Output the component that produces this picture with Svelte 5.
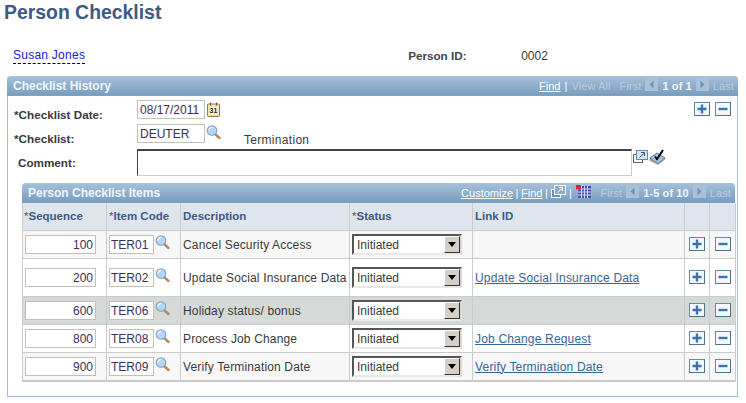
<script>
const items = [
  { seq: 100, code: 'TER01', desc: 'Cancel Security Access', link: '', cls: 'odd' },
  { seq: 200, code: 'TER02', desc: 'Update Social Insurance Data', link: 'Update Social Insurance Data', cls: 'tall' },
  { seq: 600, code: 'TER06', desc: 'Holiday status/ bonus', link: '', cls: 'grey' },
  { seq: 800, code: 'TER08', desc: 'Process Job Change', link: 'Job Change Request', cls: '' },
  { seq: 900, code: 'TER09', desc: 'Verify Termination Date', link: 'Verify Termination Date', cls: 'odd' }
]
</script>

{#snippet lens()}
  <svg class="lens" width="15" height="15" viewBox="0 0 15 15">
    <line x1="9" y1="9" x2="13.500" y2="13" stroke="#b88a5c" stroke-width="2.400" stroke-linecap="round" />
    <circle cx="6" cy="5.500" r="4.800" fill="#b5d6f3" stroke="#7ba3c6" stroke-width="1.100" />
    <path d="M3 5.500a3 3 0 0 1 3-3" fill="none" stroke="#fff" stroke-width="1.200" />
  </svg>
{/snippet}

{#snippet plus()}
  <span class="btn"><svg width="14" height="12" viewBox="0 0 14 12"><path d="M5.800 1.500h2.400v3.300h3.300v2.400h-3.300v3.300h-2.400v-3.300h-3.300v-2.400h3.300z" fill="#3d74ac" /></svg></span>
{/snippet}

{#snippet minus()}
  <span class="btn"><svg width="14" height="12" viewBox="0 0 14 12"><rect x="2.500" y="4.800" width="9" height="2.400" fill="#3d74ac" /></svg></span>
{/snippet}

{#snippet prev()}
  <span class="nav"><svg width="13" height="13" viewBox="0 0 13 13"><path d="M8.500 2.500v8l-4-4z" fill="#6f93b5" /></svg></span>
{/snippet}

{#snippet next()}
  <span class="nav"><svg width="13" height="13" viewBox="0 0 13 13"><path d="M4.500 2.500v8l4-4z" fill="#6f93b5" /></svg></span>
{/snippet}

<main>
  <h1>Person Checklist</h1>

  <div class="person">
    <a class="name" href="#top">Susan Jones</a>
    <span class="pid-label">Person ID:</span>
    <span class="pid">0002</span>
  </div>

  <section class="box">
    <header class="bar">
      <span class="bar-title">Checklist History</span>
      <span class="tools">
        <span class="lnk">Find</span><span class="sep wide">|</span><span class="off">View All</span>
        <span class="off first">First</span>{@render prev()}<b>1 of 1</b>{@render next()}<span class="off">Last</span>
      </span>
    </header>

    <div class="form">
      <div class="row-btns">{@render plus()}{@render minus()}</div>

      <div class="frow date">
        <label for="cdate">*Checklist Date:</label>
        <input id="cdate" class="field w-date" value="08/17/2011" />
        <svg class="cal" width="13" height="15" viewBox="0 0 13 15">
          <rect x=".5" y="2" width="12" height="12.500" rx="1" fill="#efe2ae" stroke="#8c7a45" />
          <path d="M3.500 .5v3M9.500 .5v3" stroke="#6b5a2c" />
          <rect x="2.500" y="5" width="8" height="7" fill="#fbf7e6" />
          <text x="6.500" y="11" text-anchor="middle" class="cal-num">31</text>
        </svg>
      </div>

      <div class="frow list">
        <label for="clist">*Checklist:</label>
        <input id="clist" class="field w-date" value="DEUTER" />
        {@render lens()}
        <span class="descr">Termination</span>
      </div>

      <div class="frow comment">
        <label for="cmt">Comment:</label>
        <textarea id="cmt"></textarea>
        <svg class="pop" width="15" height="13" viewBox="0 0 15 13">
          <rect x=".5" y="4.500" width="9" height="8" fill="#fff" stroke="#59636d" />
          <rect x="3.500" y=".5" width="11" height="9" fill="#d5e5f3" stroke="#6c8aa5" />
          <path d="M6.500 7.500l5-4.500M8 2.500h3.500v3.500" fill="none" stroke="#44535f" />
        </svg>
        <svg class="spell" width="17" height="16" viewBox="0 0 17 16">
          <path d="M1 9l7-5 8 5-7 6z" fill="#9cc4e4" stroke="#5b7486" />
          <path d="M1 10v1.500l8 4 7-5.500v-1l-7 5.500z" fill="#e9b9b9" stroke="#66707a" stroke-width=".6" />
          <path d="M6 7.500l2 2.500 6-9" fill="none" stroke="#000" stroke-width="2" />
        </svg>
      </div>

      <div class="grid">
        <header class="bar inner">
          <span class="bar-title">Person Checklist Items</span>
          <span class="tools">
            <span class="lnk">Customize</span><span class="sep">|</span><span class="lnk">Find</span><span class="sep">|</span>
            <svg class="pop2" width="15" height="13" viewBox="0 0 15 13">
              <rect x=".5" y="4.500" width="9" height="8" fill="#6f93b5" stroke="#fff" />
              <rect x="3.500" y=".5" width="11" height="9" fill="#8aaac6" stroke="#fff" />
              <path d="M6.500 7.500l5-4.500M8 2.500h3.500v3.500" fill="none" stroke="#fff" />
            </svg><span class="sep">|</span>
            <svg class="cols" width="15" height="14" viewBox="0 0 15 14">
              <rect x="2" y="1" width="13" height="12" fill="#4a4fae" />
              <path d="M5.500 1v12M8.500 1v12M11.500 1v12M2 4h13M2 7h13M2 10h13" stroke="#d3d8f0" />
              <path d="M0 0h5l-1.500 1.500 2 2-2 2-2-2-1.500 1.500z" fill="#e0262c" />
            </svg>
            <span class="off first">First</span>{@render prev()}<b>1-5 of 10</b>{@render next()}<span class="off">Last</span>
          </span>
        </header>

        <table>
          <colgroup>
            <col class="w1" /><col class="w2" /><col class="w3" />
            <col class="w4" /><col class="w5" /><col class="w6" /><col class="w7" />
          </colgroup>
          <thead>
            <tr>
              <th class="first-h"><i>*</i>Sequence</th>
              <th><i>*</i>Item Code</th>
              <th>Description</th>
              <th><i>*</i>Status</th>
              <th>Link ID</th>
              <th></th>
              <th></th>
            </tr>
          </thead>
          <tbody>
            {#each items as item (item.seq)}
              <tr class={item.cls}>
                <td class="c-seq"><input class="field seq" value={item.seq} /></td>
                <td class="c-code"><input class="field code" value={item.code} />{@render lens()}</td>
                <td class="c-desc">{item.desc}</td>
                <td class="c-status">
                  <span class="select"><span class="sel-text">Initiated</span><span class="arrow"></span></span>
                </td>
                <td class="c-link">{#if item.link}<a href="#top">{item.link}</a>{/if}</td>
                <td class="c-btn">{@render plus()}</td>
                <td class="c-btn">{@render minus()}</td>
              </tr>
            {/each}
          </tbody>
        </table>
      </div>
    </div>
  </section>
</main>

<style>
:global(body) {
  background: #fff;
}

main {
  width: 746px;
  height: 403px;
  overflow: hidden;
  font-family: "Liberation Sans", Arial, sans-serif;
  font-size: 12px;
  color: #3a3a3a;
}

h1 {
  margin: 0;
  padding: 2px 0 1px 4px;
  font-size: 19.400px;
  line-height: 20px;
  color: #3c5a86;
}

.person {
  display: flex;
  align-items: center;
  height: 20px;
  margin-top: 23px;
  padding-left: 13px;
}

.name {
  flex: none;
  height: 15px;
  line-height: 15px;
  letter-spacing: .25px;
  color: #1a1ad0;
  text-decoration: none;
  border-bottom: 1px dashed #000;
}

.pid-label {
  margin: -1px 0 0 323px;
  width: 113px;
  font-weight: bold;
  font-size: 11.700px;
  color: #444;
}

.box {
  width: 731px;
  height: 321px;
  margin: 10px 0 0 7px;
  border: 1px solid #a3bfd9;
  border-top: 0;
  border-radius: 4px 4px 0 0;
  box-sizing: border-box;
}

.bar {
  display: flex;
  align-items: center;
  justify-content: space-between;
  height: 20px;
  margin: 0 -1px;
  padding: 0 4px 0 6px;
  border-radius: 4px 4px 0 0;
  background: linear-gradient(#a3bfd9, #7a9dbf);
  border-top: 1px solid #a9bfd2;
  border-bottom: 1px solid #7fa1c0;
  box-sizing: border-box;
  color: #f1f5f9;
}

.bar-title {
  font-weight: bold;
}

.tools {
  display: flex;
  align-items: center;
  font-size: 11px;
  letter-spacing: .1px;
  color: #fff;
}

.lnk {
  letter-spacing: 0;
  text-decoration: underline;
}

.sep {
  margin: 0 2.500px;
}

.sep.wide {
  margin: 0 4px;
}

.off {
  color: #b8cbdd;
}

.first {
  margin-left: 9px;
}

.tools b {
  color: #f2f6fa;
}

.nav {
  display: flex;
  width: 13px;
  height: 13px;
  margin: -3px 4px 0;
  background: #a9c2d9;
}

.form {
  position: relative;
  padding-top: 4px;
}

.row-btns {
  position: absolute;
  top: 6px;
  right: 6px;
  display: flex;
  gap: 5px;
}

.btn {
  display: inline-flex;
  align-items: center;
  justify-content: center;
  width: 14px;
  height: 12px;
  border: 1px solid #648ba0;
  border-right-color: #4d7488;
  border-bottom-color: #4d7488;
  background: #f1f7fb;
  overflow: hidden;
}

.frow {
  display: flex;
  align-items: flex-start;
}

.frow label {
  flex: none;
  box-sizing: border-box;
  width: 129px;
  padding: 7px 0 0 6px;
  font-weight: bold;
  font-size: 11.700px;
  line-height: 15px;
  color: #3a3a3a;
}

.frow.date {
  height: 24px;
}

.frow.list {
  height: 25px;
}

.frow.comment {
  height: 34px;
}

.frow.comment label {
  padding: 6px 0 0 10px;
}

.field {
  box-sizing: border-box;
  height: 19px;
  padding: 0 2px;
  border: 1px solid #c4c0b8;
  background: #fff;
  font: 12px "Liberation Sans", Arial, sans-serif;
  color: #3a2f5a;
  outline: none;
  border-radius: 0;
}

.w-date {
  flex: none;
  width: 68px;
}

.cal {
  margin: 2px 0 0 2px;
}

.cal-num {
  font: bold 7px "Liberation Sans", Arial, sans-serif;
  fill: #222;
}

.lens {
  flex: none;
  margin: 1px 0 0 1px;
}

.descr {
  margin: 9px 0 0 23px;
  letter-spacing: .3px;
}

textarea {
  flex: none;
  box-sizing: border-box;
  width: 495px;
  height: 27px;
  margin: 0;
  padding: 0;
  resize: none;
  border-style: solid;
  border-width: 2px 1px 1px 1px;
  border-color: #444 #cfcbc4 #cfcbc4 #444;
  outline: none;
  border-radius: 0;
}

.pop {
  margin: 1px 0 0 1px;
}

.spell {
  margin: 0 0 0 1px;
}

.grid {
  width: 713px;
  margin-left: 14px;
}

.bar.inner {
  margin: 0;
  padding: 0 4px 0 6px;
  height: 20px;
}

.pop2 {
  margin: -3px 0 0 1px;
}

.cols {
  margin: -3px 0 0 2px;
}

table {
  width: 713px;
  table-layout: fixed;
  border-collapse: collapse;
  border: 1px solid #cbcbcb;
  border-bottom-width: 2px;
  border-top: 0;
  color: #3a3a3a;
}

.w1 { width: 84px; }
.w2 { width: 74px; }
.w3 { width: 169px; }
.w4 { width: 123px; }
.w5 { width: 212px; }
.w6 { width: 25px; }
.w7 { width: 26px; }

th {
  height: 26px;
  padding: 0 0 1px 2px;
  border: 1px solid #cbcbcb;
  border-top: 0;
  background: #dfe5ec;
  text-align: left;
  font-weight: bold;
  font-size: 11.500px;
  color: #3c5a86;
}

th.first-h {
  padding-left: 1px;
}

th i {
  font-style: normal;
  font-weight: normal;
  color: #555;
}

td {
  height: 27px;
  padding: 0;
  border: 1px solid #cbcbcb;
  background: #fff;
  white-space: nowrap;
}

.odd td {
  background: #f7f7f7;
}

.grey td {
  background: #d5dad8;
}

.tall td {
  height: 37px;
}

.c-seq {
  padding-left: 2px;
}

.seq {
  width: 71px;
  text-align: right;
  vertical-align: middle;
}

.c-code {
  padding-left: 2px;
}

.code {
  width: 45px;
  padding: 0 1px;
  vertical-align: middle;
}

.c-code .lens {
  vertical-align: middle;
  margin: -5px 0 0 1px;
}

.c-desc {
  padding-left: 2px;
  overflow: hidden;
  letter-spacing: .15px;
}

.c-status {
  padding-left: 2px;
}

.select {
  display: flex;
  align-items: center;
  box-sizing: border-box;
  width: 110px;
  height: 21px;
  border: 2px solid;
  border-color: #555 #d8d8d8 #e8e8e8 #555;
  background: #fff;
}

.sel-text {
  flex: 1;
  padding-left: 3px;
}

.arrow {
  position: relative;
  width: 16px;
  height: 17px;
  box-sizing: border-box;
  border: 1px solid;
  border-color: #fff #333 #333 #fff;
  background: #d4d0c8;
}

.arrow::after {
  content: "";
  position: absolute;
  left: 3px;
  top: 5px;
  border: 4px solid transparent;
  border-top: 5px solid #000;
  border-bottom: 0;
}

.c-link {
  padding-left: 2px;
  letter-spacing: .18px;
}

.c-link a {
  color: #33669a;
  text-decoration: underline;
}

.c-btn {
  text-align: center;
}

.c-btn .btn {
  vertical-align: middle;
  margin-top: -3px;
}
</style>
